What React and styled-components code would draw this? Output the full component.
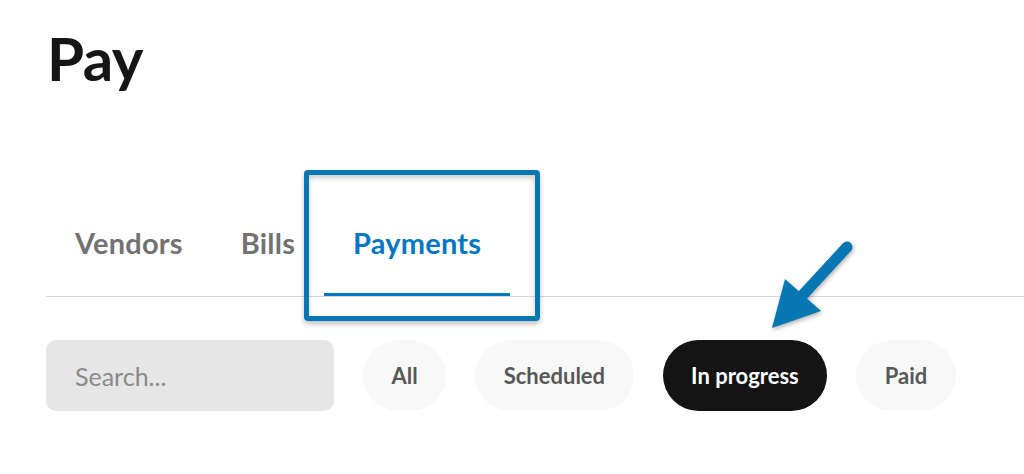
import React, { useState } from 'react';
import styled, { createGlobalStyle } from 'styled-components';

const GlobalStyle = createGlobalStyle`
  html, body {
    margin: 0;
    padding: 0;
    background: #fff;
  }
  body {
    font-family: Lato, "Noto Sans", sans-serif;
    overflow: hidden;
  }
`;

const Page = styled.div`
  position: relative;
  width: 1024px;
  height: 474px;
  padding-left: 46px;
  box-sizing: border-box;
`;

const Title = styled.h1`
  margin: 0;
  padding-top: 22px;
  padding-left: 1px;
  font-size: 60px;
  line-height: 72px;
  font-weight: 700;
  color: #161616;
  letter-spacing: -0.5px;
`;

const TabBar = styled.div`
  display: flex;
  margin-top: 94px;
  border-bottom: 1px solid #d6d6d6;
`;

const Tab = styled.button`
  background: none;
  border: none;
  margin: 0;
  padding: 0 29px;
  height: 108px;
  display: flex;
  align-items: center;
  font-family: inherit;
  font-size: 29px;
  font-weight: 700;
  letter-spacing: 0.2px;
  cursor: pointer;
  color: ${(p) => (p.active ? '#0077c5' : '#727272')};
  box-shadow: ${(p) => (p.active ? 'inset 0 -3px 0 #0077c5' : 'none')};
`;

const FilterRow = styled.div`
  display: flex;
  align-items: center;
  gap: 29px;
  margin-top: 43px;
`;

const SearchInput = styled.input`
  width: 288px;
  height: 71px;
  box-sizing: border-box;
  border: none;
  border-radius: 10px;
  background: #e6e6e6;
  padding: 0 29px;
  font-family: inherit;
  font-size: 25px;
  color: #333;
  outline: none;
  &::placeholder {
    color: #8a8a8a;
  }
`;

const Pill = styled.button`
  height: 71px;
  padding: 0 28.5px;
  border: none;
  border-radius: 36px;
  font-family: inherit;
  font-size: 22px;
  font-weight: 700;
  cursor: pointer;
  background: ${(p) => (p.active ? '#141414' : '#f8f8f8')};
  color: ${(p) => (p.active ? '#fff' : '#585858')};
`;

const Highlight = styled.div`
  position: absolute;
  left: 304px;
  top: 170px;
  width: 236px;
  height: 151px;
  box-sizing: border-box;
  border: 5px solid #0677b2;
  border-radius: 4px;
  box-shadow: 0 3px 5px rgba(0, 0, 0, 0.25), inset 0 3px 5px rgba(0, 0, 0, 0.2);
  pointer-events: none;
`;

const Arrow = styled.svg`
  position: absolute;
  left: 0;
  top: 0;
  pointer-events: none;
  filter: drop-shadow(1px 2px 2px rgba(0, 0, 0, 0.3));
`;

const tabs = ['Vendors', 'Bills', 'Payments'];
const filters = ['All', 'Scheduled', 'In progress', 'Paid'];

export default function App() {
  const [tab, setTab] = useState('Payments');
  const [filter, setFilter] = useState('In progress');

  return (
    <>
      <GlobalStyle />
      <Page>
        <Title>Pay</Title>
        <TabBar>
          {tabs.map((t) => (
            <Tab key={t} active={t === tab} onClick={() => setTab(t)}>
              {t}
            </Tab>
          ))}
        </TabBar>
        <FilterRow>
          <SearchInput placeholder="Search..." />
          {filters.map((f) => (
            <Pill key={f} active={f === filter} onClick={() => setFilter(f)}>
              {f}
            </Pill>
          ))}
        </FilterRow>
        <Highlight />
        <Arrow width="1024" height="474" viewBox="0 0 1024 474">
          <line x1="847" y1="247" x2="800" y2="298" stroke="#0677b2" strokeWidth="11" strokeLinecap="round" />
          <polygon points="785,279 821,311 772,328" fill="#0677b2" />
        </Arrow>
      </Page>
    </>
  );
}
